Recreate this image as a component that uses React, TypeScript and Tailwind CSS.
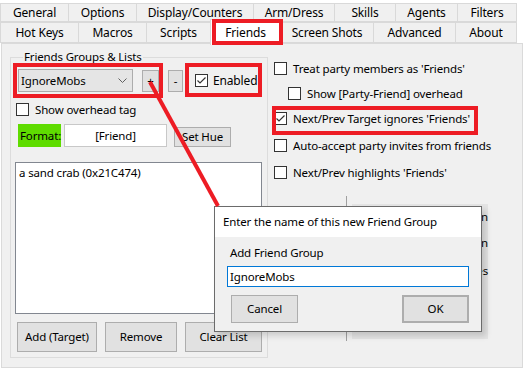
import React from 'react';

const font = { fontFamily: '"Segoe UI", "Noto Sans", sans-serif' };

const topRow = [
  { label: 'General', w: 'w-[69px]' },
  { label: 'Options', w: 'w-[69px]' },
  { label: 'Display/Counters', w: 'w-[118px]' },
  { label: 'Arm/Dress', w: 'w-[82px]' },
  { label: 'Skills', w: 'w-[62px]' },
  { label: 'Agents', w: 'w-[63px]' },
  { label: 'Filters', w: 'w-[60px]' },
];

const bottomRow = [
  { label: 'Hot Keys', w: 'w-[79px]' },
  { label: 'Macros', w: 'w-[69px]' },
  { label: 'Scripts', w: 'w-[65px]' },
  { label: 'Friends', w: 'w-[71px]', active: true },
  { label: 'Screen Shots', w: 'w-[94px]' },
  { label: 'Advanced', w: 'w-[83px]' },
  { label: 'About', w: 'w-[62px]' },
];

function CheckBox({ checked = false }: { checked?: boolean }) {
  return (
    <span className="flex h-[13px] w-[13px] shrink-0 items-center justify-center border border-[#333333] bg-white">
      {checked && (
        <svg width="11" height="11" viewBox="0 0 11 11">
          <polyline points="1.5,5.5 4,8 9.5,2.5" fill="none" stroke="#333333" strokeWidth="1.2" />
        </svg>
      )}
    </span>
  );
}

function Btn({ className, children }: { className: string; children: React.ReactNode }) {
  return (
    <div className={`flex shrink-0 items-center justify-center border border-[#adadad] bg-[#e1e1e1] ${className}`}>
      {children}
    </div>
  );
}

function Option({ label, checked, indent }: { label: string; checked?: boolean; indent?: boolean }) {
  return (
    <div className={`flex h-[13px] items-center gap-[6px] ${indent ? 'ml-[14px]' : ''}`}>
      <CheckBox checked={checked} />
      <span className="whitespace-nowrap leading-none">{label}</span>
    </div>
  );
}

export default function App() {
  return (
    <div
      className="relative h-[370px] w-[527px] overflow-hidden bg-white text-[11.5px] tracking-[-0.15px] text-black"
      style={font}
    >
      {/* tab rows */}
      <div className="mt-[3px] flex h-[19px] text-[12px]">
        {topRow.map((t, i) => (
          <div
            key={t.label}
            className={`flex items-center justify-center border border-[#d9d9d9] bg-[#f0f0f0] ${t.w} ${i > 0 ? '-ml-px' : ''}`}
          >
            {t.label}
          </div>
        ))}
      </div>
      <div className="flex h-[21px] text-[12px]">
        {bottomRow.map((t, i) => (
          <div
            key={t.label}
            className={`flex items-center justify-center border ${t.w} ${i > 0 ? '-ml-px' : ''} ${
              t.active
                ? 'relative z-10 -mt-[3px] h-[26px] border-[#d9d9d9] border-b-0 bg-white'
                : 'border-[#d9d9d9] bg-[#f0f0f0]'
            }`}
          >
            {t.label}
          </div>
        ))}
      </div>

      {/* tab page */}
      <div className="ml-px flex h-[325px] w-[522px] border border-[#dadada] bg-[#f0f0f0]">
        <fieldset className="ml-[8px] mt-[5px] h-[309px] w-[258px] border border-[#dcdcdc] pl-[4px]">
          <legend className="ml-[8px] px-[1px] leading-[16px]">Friends Groups &amp; Lists</legend>

          <div className="ml-[3px] mt-[4px] flex h-[23px] items-start">
            <div className="flex h-[23px] w-[115px] items-center justify-between border border-[#acacac] bg-[#e5e5e5] pl-[2px] pr-[5px]">
              <span>IgnoreMobs</span>
              <svg width="9" height="5" viewBox="0 0 9 5">
                <polyline points="0.5,0.5 4.5,4.5 8.5,0.5" fill="none" stroke="#606060" strokeWidth="1" />
              </svg>
            </div>
            <Btn className="ml-[9px] mt-px h-[22px] w-[17px]">+</Btn>
            <Btn className="ml-[9px] mt-px h-[22px] w-[15px]">-</Btn>
            <div className="ml-[12px] flex h-[23px] items-center gap-[5px]">
              <CheckBox checked />
              <span className="text-[12px]">Enabled</span>
            </div>
          </div>

          <div className="ml-px mt-[11px] flex h-[13px] items-center gap-[6px]">
            <CheckBox />
            <span className="leading-none">Show overhead tag</span>
          </div>

          <div className="ml-[3px] mt-[8px] flex h-[23px] items-start">
            <div className="flex h-[23px] w-[43px] items-center bg-[#5fdc00] pl-[2px]">Format:</div>
            <div className="ml-[3px] flex h-[23px] w-[103px] items-center justify-center border border-[#c8c8c8] bg-white">
              [Friend]
            </div>
            <Btn className="ml-[7px] mt-[3px] h-[20px] w-[57px]">Set Hue</Btn>
          </div>

          <div className="mt-[15px] h-[152px] w-[247px] border border-[#828790] bg-white px-[3px] pt-px">
            a sand crab (0x21C474)
          </div>

          <div className="ml-[2px] mt-[8px] flex h-[30px]">
            <Btn className="h-[30px] w-[80px]">Add (Target)</Btn>
            <Btn className="ml-[8px] h-[30px] w-[72px]">Remove</Btn>
            <Btn className="ml-[8px] h-[30px] w-[77px]">Clear List</Btn>
          </div>
        </fieldset>

        <div className="ml-[6px] mt-[18px] flex flex-col">
          <Option label="Treat party members as 'Friends'" />
          <div className="mt-[12px]">
            <Option label="Show [Party-Friend] overhead" indent />
          </div>
          <div className="mt-[12px]">
            <Option label="Next/Prev Target ignores 'Friends'" checked />
          </div>
          <div className="mt-[14px]">
            <Option label="Auto-accept party invites from friends" />
          </div>
          <div className="mt-[14px]">
            <Option label="Next/Prev highlights 'Friends'" />
          </div>

          <div className="ml-[72px] mt-[17px] h-[145px] w-[166px] border-l border-[#a0a0a0] pl-[5px] pt-[8px]">
            <div className="flex h-[135px] w-[136px] flex-col items-end gap-[12px] bg-[#e4e4e4] pt-[6px] leading-[14px]">
              <span>Open</span>
              <span>Open</span>
              <span className="mt-[2px]">Hues</span>
            </div>
          </div>
        </div>
      </div>

      {/* dialog */}
      <div className="absolute left-[214px] top-[206px] z-20 flex h-[126px] w-[268px] flex-col border border-[#6b6b6b] bg-[#f0f0f0] shadow-[4px_4px_6px_rgba(0,0,0,0.15)]">
        <div className="flex h-[30px] items-center bg-white pl-[8px]">Enter the name of this new Friend Group</div>
        <div className="pl-[15px] pt-[8px] leading-[16px]">Add Friend Group</div>
        <div className="ml-[12px] mt-[5px] flex h-[21px] w-[242px] items-center border border-[#0078d7] bg-white pl-[2px]">
          IgnoreMobs
        </div>
        <div className="ml-[16px] mt-[8px] flex w-[238px] justify-between">
          <Btn className="h-[28px] w-[67px]">Cancel</Btn>
          <Btn className="h-[28px] w-[67px] border-2 border-[#0078d7]">OK</Btn>
        </div>
      </div>

      {/* red annotations */}
      <svg className="pointer-events-none absolute left-0 top-0 z-30" width="527" height="370">
        <g fill="none" stroke="#ed1c24" strokeWidth="4">
          <rect x="214" y="21" width="67" height="22" />
          <rect x="15" y="65" width="146" height="31" />
          <rect x="187" y="65" width="73" height="30" />
          <rect x="274" y="108" width="202" height="25" />
          <line x1="150" y1="82" x2="218" y2="206" />
        </g>
      </svg>
    </div>
  );
}
